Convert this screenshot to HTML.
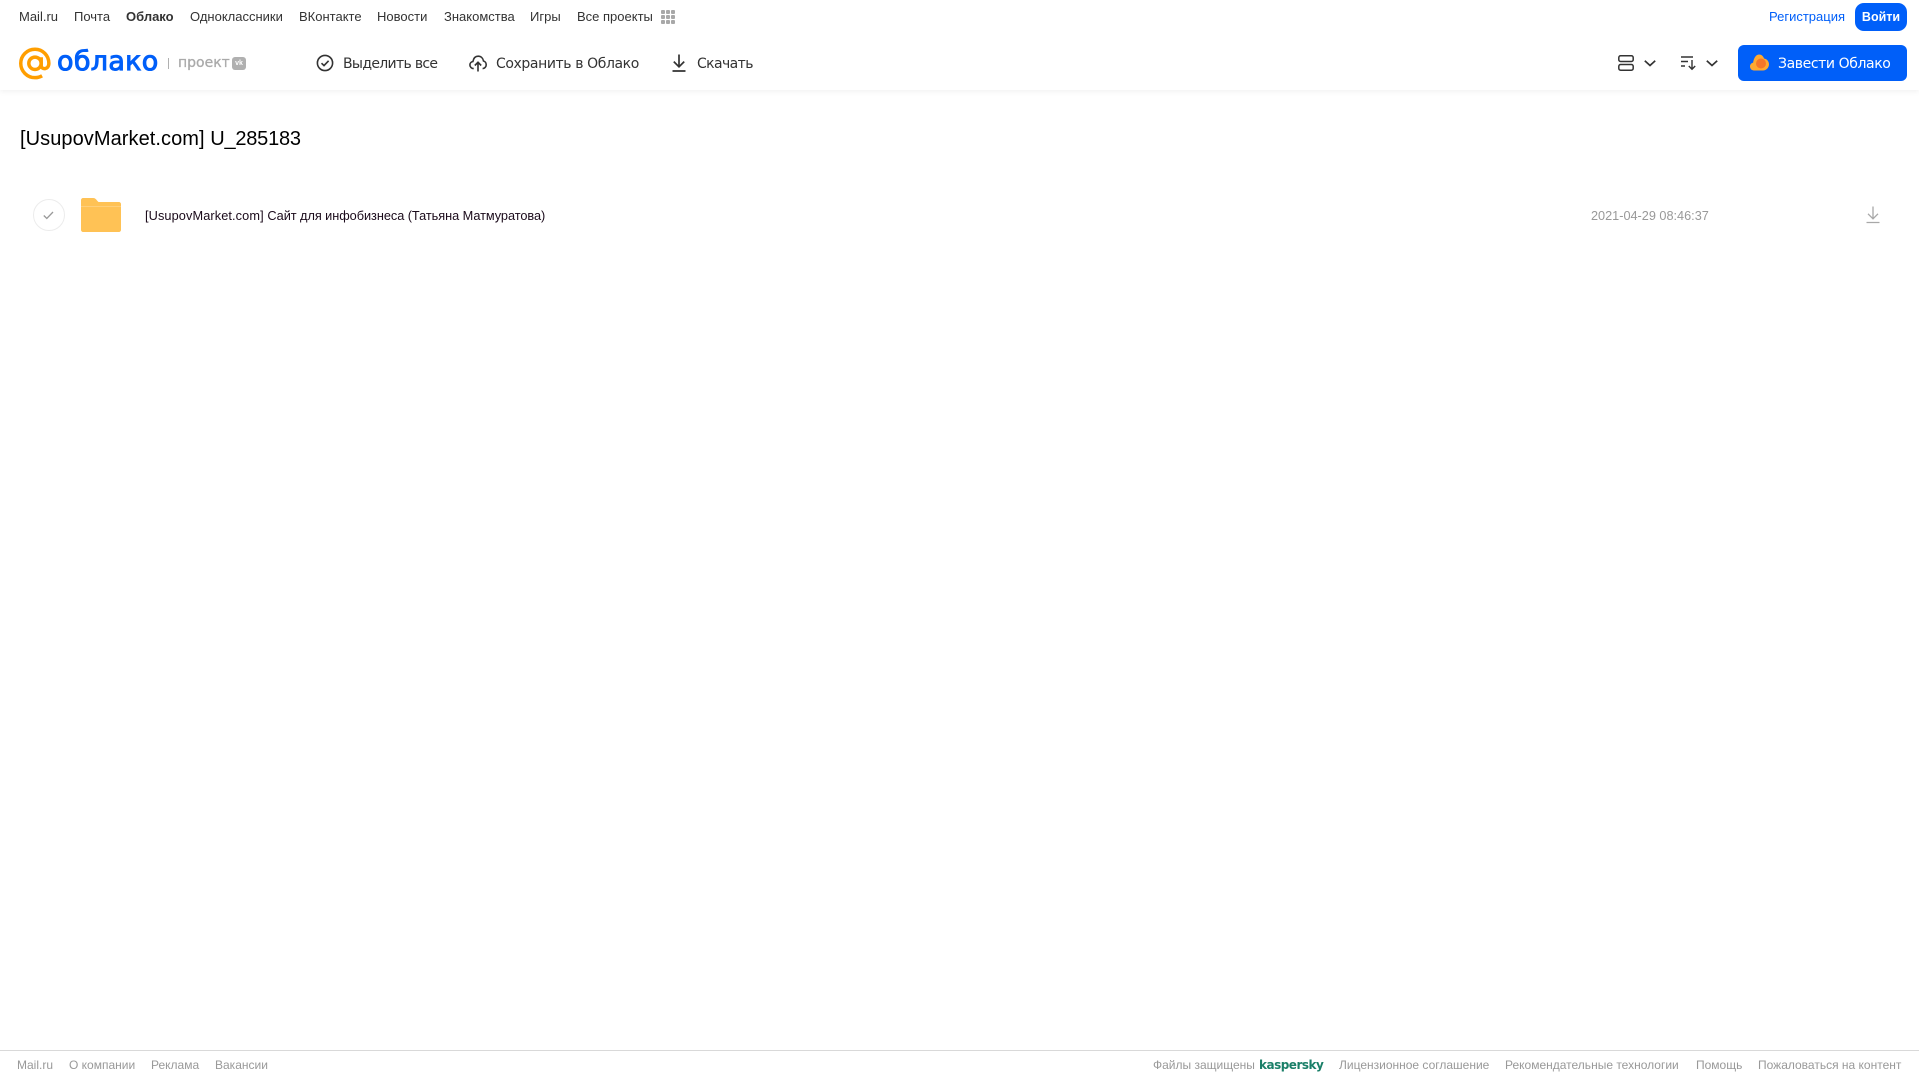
<!DOCTYPE html>
<html lang="ru"><head><meta charset="utf-8"><title>Облако</title>
<style>
html,body{margin:0;padding:0;background:#fff;}
body{position:relative;width:1919px;height:1079px;overflow:hidden;font-family:"Liberation Sans",Arial,sans-serif;}
.t{position:absolute;white-space:nowrap;line-height:20px;}
.n{top:7px;font-size:13px;color:#333;}
.a{top:54px;font-family:"DejaVu Sans","Liberation Sans",sans-serif;font-size:14px;color:#333;}
.f{top:1055px;font-size:12px;color:#999;}
svg{position:absolute;overflow:visible;}
</style></head><body>

<div style="position:absolute;left:0;top:0;width:1919px;height:90px;background:#fff;box-shadow:0 1px 6px rgba(0,0,0,.07);"></div>

<span class="t n" style="left:19px">Mail.ru</span>
<span class="t n" style="left:74px">Почта</span>
<span class="t n" style="left:126px;font-weight:bold">Облако</span>
<span class="t n" style="left:190px">Одноклассники</span>
<span class="t n" style="left:299px">ВКонтакте</span>
<span class="t n" style="left:377px">Новости</span>
<span class="t n" style="left:444px">Знакомства</span>
<span class="t n" style="left:530px">Игры</span>
<span class="t n" style="left:577px">Все проекты</span>
<svg style="left:661px;top:10px" width="14" height="14" fill="#a8a8a8"><rect width="4" height="4" rx="1"/><rect x="5" width="4" height="4" rx="1"/><rect x="10" width="4" height="4" rx="1"/><rect y="5" width="4" height="4" rx="1"/><rect x="5" y="5" width="4" height="4" rx="1"/><rect x="10" y="5" width="4" height="4" rx="1"/><rect y="10" width="4" height="4" rx="1"/><rect x="5" y="10" width="4" height="4" rx="1"/><rect x="10" y="10" width="4" height="4" rx="1"/></svg>

<span class="t n" style="left:1769px;color:#005ff9">Регистрация</span>
<div style="position:absolute;left:1855px;top:3px;width:52px;height:28px;background:#005ff9;border-radius:9px;color:#fff;font-size:12.5px;font-weight:bold;line-height:28px;text-align:center;">Войти</div>

<svg style="left:19px;top:47px" width="32" height="33" viewBox="0 0 33 33" fill="none" stroke="#ff9e00" stroke-width="3.6"><circle cx="16.5" cy="16.3" r="6.4"/><path d="M22.9 10v8.600c0 4.600 7.900 4.600 7.900-2.300C30.800 8.300 24.500 1.800 16.500 1.800 8.400 1.800 1.800 8.300 1.800 16.400s6.600 14.700 14.700 14.700c2.800 0 5.200-.7 7.300-1.900"/></svg>
<span class="t" style="left:57px;top:46px;line-height:32px;font-family:'DejaVu Sans',sans-serif;font-size:27px;color:#005ff9;letter-spacing:.3px;-webkit-text-stroke:1px #005ff9;">облако</span>
<div style="position:absolute;left:168px;top:58px;width:1px;height:11px;background:#b0b0b0;"></div>
<span class="t" style="left:178px;top:53px;font-family:'DejaVu Sans',sans-serif;font-size:14px;color:#aaa;-webkit-text-stroke:.3px #aaa;">проект</span>
<div style="position:absolute;left:232px;top:57px;width:14px;height:13px;background:#b0b0b0;border-radius:3px;color:#fff;font-size:7px;font-weight:bold;line-height:13px;text-align:center;">vk</div>

<svg style="left:316px;top:54px" width="18" height="18" viewBox="0 0 18 18" fill="none" stroke="#333" stroke-width="1.6"><circle cx="9" cy="9" r="7.6"/><path d="M5.500 9.200l2.500 2.400 4.600-4.800"/></svg>
<span class="t a" style="left:343px;letter-spacing:-.67px">Выделить все</span>

<svg style="left:469px;top:54px" width="18" height="18" viewBox="0 0 18 18" fill="none" stroke="#333" stroke-width="1.600"><path d="M4.700 14.600C2.600 14.600 .9 13 .9 11c0-1.800 1.300-3.200 3-3.500C4.500 4.500 6.300 2.200 9.200 2.200c2.800 0 4.800 2 5.300 4.800 1.600.4 2.700 2 2.700 3.700 0 2.200-1.600 3.900-3.600 3.900"/><path d="M9 17.500V8.500M5.800 11.500L9 8.300l3.200 3.200"/></svg>
<span class="t a" style="left:496px;letter-spacing:-.4px">Сохранить в Облако</span>

<svg style="left:672px;top:54px" width="14" height="18" viewBox="0 0 14 18" fill="none" stroke="#333" stroke-width="1.700"><path d="M7 .5v12M1.800 7.600L7 12.800l5.200-5.200M.5 17h13"/></svg>
<span class="t a" style="left:697px;letter-spacing:-.6px">Скачать</span>

<svg style="left:1618px;top:55px" width="16" height="16" viewBox="0 0 16 16" fill="none" stroke="#333" stroke-width="1.500"><rect x=".8" y=".8" width="14.400" height="5.700" rx="1.800"/><rect x=".8" y="9.500" width="14.400" height="5.700" rx="1.800"/></svg>
<svg style="left:1644px;top:60px" width="12" height="7" fill="none" stroke="#333" stroke-width="1.700"><path d="M.8.8L6 5.500 11.200.8"/></svg>
<svg style="left:1681px;top:56px" width="16" height="14" viewBox="0 0 16 14" fill="none" stroke="#333" stroke-width="1.400"><path d="M0 1h12M0 5.500h7M0 10h4M11 4v9M7.800 10l3.200 3.200 3.200-3.200"/></svg>
<svg style="left:1706px;top:60px" width="12" height="7" fill="none" stroke="#333" stroke-width="1.700"><path d="M.8.8L6 5.500 11.200.8"/></svg>

<div style="position:absolute;left:1738px;top:45px;width:169px;height:36px;background:#005ff9;border-radius:6px;"></div>
<svg style="left:1750px;top:54px" width="19" height="17" viewBox="0 0 19 17"><path d="M4 16.500C1.800 16.500 0 14.700 0 12.500c0-1.900 1.300-3.500 3.100-3.900C3.600 5 5.500 .5 9 .5c2.500 0 4.300 1.700 5 4 2.700.3 5 2.800 5 5.800 0 3.400-2.700 6.200-6 6.200z" fill="#ffa930"/><circle cx="11" cy="9.500" r="5" fill="#f5772a"/></svg>
<span class="t a" style="left:1778px;color:#fff;letter-spacing:-.4px">Завести Облако</span>

<span class="t" style="left:20px;top:127px;line-height:24px;font-size:20px;color:#000;"><span style="letter-spacing:.07px">[UsupovMarket.com] </span><span style="letter-spacing:-.23px">U_285183</span></span>

<div style="position:absolute;left:33px;top:199px;width:30px;height:30px;border:1px solid #ececec;border-radius:50%;"></div>
<svg style="left:43px;top:211px" width="11" height="9" fill="none" stroke="#999" stroke-width="1.300"><path d="M.8 4.500l3 3L10 1"/></svg>
<svg style="left:81px;top:198px" width="40" height="34" viewBox="0 0 40 34"><path d="M2 0h10c2 0 3 1 4 2.500L17.500 4H38c1 0 2 1 2 2v26c0 1-1 2-2 2H2c-1 0-2-1-2-2V2C0 1 1 0 2 0z" fill="#ffc255"/><rect y="8" width="40" height="1" fill="#ffcf7a"/></svg>
<span class="t" style="left:145px;top:206px;font-size:12.750px;color:#1a0a1a;"><span style="letter-spacing:.1px">[UsupovMarket.com] </span><span style="letter-spacing:-.05px">Сайт для инфобизнеса (Татьяна Матмуратова)</span></span>

<span class="t" style="left:1591px;top:206px;font-size:12.700px;color:#999;">2021-04-29 08:46:37</span>
<svg style="left:1866px;top:206px" width="14" height="18" viewBox="0 0 14 18" fill="none" stroke="#a8a8a8" stroke-width="1.300"><path d="M7 .5v12M2 7.800L7 12.800l5-5M.5 16.500h13"/></svg>

<div style="position:absolute;left:0;top:1050px;width:1919px;height:1px;background:#d9d9d9;"></div>
<span class="t f" style="left:17px">Mail.ru</span>
<span class="t f" style="left:69px">О компании</span>
<span class="t f" style="left:151px">Реклама</span>
<span class="t f" style="left:215px">Вакансии</span>
<span class="t f" style="left:1153px">Файлы защищены</span>
<span class="t" style="left:1259px;top:1055px;font-family:'DejaVu Sans',sans-serif;font-size:12px;font-weight:bold;color:#1a7f68;letter-spacing:-.5px;">kaspersky</span>
<span class="t f" style="left:1339px">Лицензионное соглашение</span>
<span class="t f" style="left:1505px">Рекомендательные технологии</span>
<span class="t f" style="left:1696px">Помощь</span>
<span class="t f" style="left:1758px">Пожаловаться на контент</span>
</body></html>
